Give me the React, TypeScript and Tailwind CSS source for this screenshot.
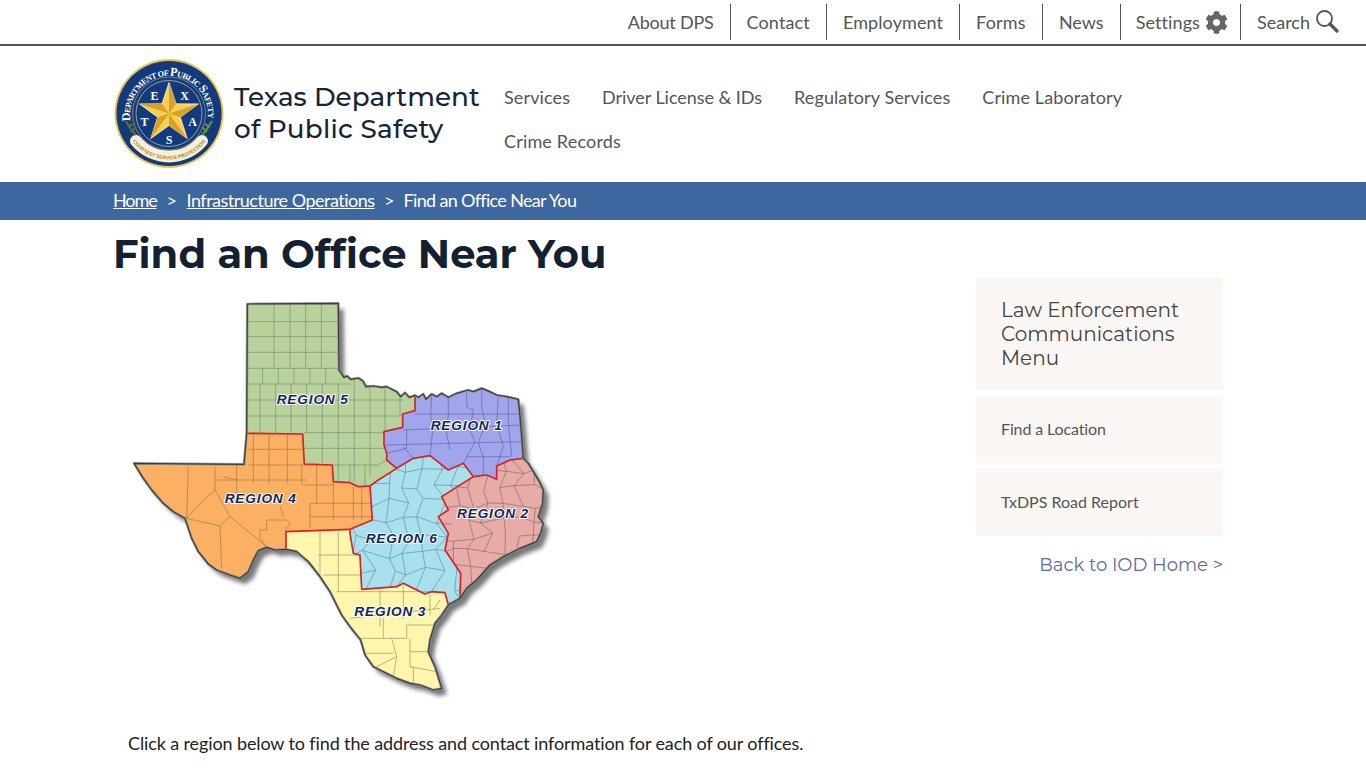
import React from "react";
import { FaCog } from "react-icons/fa";

const top: [string, string][] = [
  ["About DPS", "tracking-[-0.22px]"],
  ["Contact", "tracking-[0.14px]"],
  ["Employment", "tracking-[0.1px]"],
  ["Forms", "tracking-[0.2px]"],
  ["News", ""],
];
const nav: [string, string][] = [
  ["Services", "tracking-[0.12px]"],
  ["Driver License & IDs", "tracking-[-0.05px]"],
  ["Regulatory Services", "tracking-[0.1px]"],
  ["Crime Laboratory", "tracking-[0.12px]"],
  ["Crime Records", "tracking-[0.18px]"],
];

const RED1 = "657,240 672,262 682,258 692,268 715,264 728,272 738,290 760,288 785,292 800,290 830,305 842,320 855,308 868,322 885,316";
const RED2 = "885,316 895,322 910,312 918,328 935,312 950,320 965,310 985,322 1010,310 1045,300 1060,305 1085,295 1110,305 1130,315 1160,320 1195,328";
const EAST1 = "1195,328 1200,380 1205,440 1210,505";
const EAST2 = "1210,505 1225,520 1240,545 1258,575 1270,600 1268,640 1255,680 1270,700 1262,730 1250,755 1200,775 1150,800 1110,825 1070,870 1040,895 1020,925";
const COAST3 = "985,945 965,975 945,1000 930,1050 925,1085 945,1130 965,1195 940,1200 900,1185 870,1180 830,1165 790,1145 760,1130 735,1095 722,1050 690,1010 665,975 630,905 600,860 565,815 530,785 498,778";
const WEST = "498,778 465,780 440,772 415,782 400,810 385,845 360,865 330,855 290,840 265,822 235,785 215,745 195,685 160,665 130,640 95,600 70,565 42,520 372,523 380,430";

const B15 = "885,316 885,362 848,372 848,412 792,425 792,465 800,490 800,510 830,535";
const B16 = "830,535 880,505 930,497 985,540 1030,520 1060,560";
const B12 = "1060,560 1100,555 1130,568 1130,528 1170,510 1210,505";
const B26 = "1060,560 965,620 985,660 955,680 985,730 975,780 1022,850 1020,925";
const B56 = "830,535 775,570 750,588";
const B45 = "380,430 548,432 553,522 637,525 640,575 690,578 715,590 750,588";
const B46 = "750,588 757,690 690,718";
const B43 = "690,718 498,725 498,778";
const B63 = "690,718 690,730 700,790 720,795 725,898 830,890 850,880 880,895 915,912 935,905 975,908 985,945";

const rev = (s: string) => s.split(" ").reverse().join(" ");
const R5 = `382,42 655,40 ${RED1} ${B15} ${B56} ${rev(B45)}`;
const R1 = `${RED2} ${EAST1} ${rev(B12)} ${rev(B16)} ${rev(B15)}`;
const R2 = `${EAST2} ${rev(B26)} ${B12}`;
const R6 = `${B56} ${B46} ${B63} 1020,925 ${rev(B26)} ${rev(B16)}`;
const R4 = `${B45} ${B46} ${B43} ${WEST}`;
const R3 = `${rev(B43)} ${B63.split(" ").slice(1).join(" ")} ${COAST3}`;
const OUTLINE = `380,430 382,42 655,40 ${RED1} ${RED2} ${EAST1} ${EAST2} ${COAST3} ${WEST}`;

function mesh(x0: number, y0: number, x1: number, y1: number, cw: number, ch: number, j: number, seed: number) {
  let s = seed;
  const rnd = () => {
    s = (s * 9301 + 49297) % 233280;
    return s / 233280;
  };
  const cols = Math.ceil((x1 - x0) / cw);
  const rows = Math.ceil((y1 - y0) / ch);
  const pts: [number, number][][] = [];
  for (let r = 0; r <= rows; r++) {
    const row: [number, number][] = [];
    for (let c = 0; c <= cols; c++) {
      row.push([
        Math.round(x0 + c * cw + (r % 2 ? cw / 3 : 0) + (rnd() - 0.5) * j),
        Math.round(y0 + r * ch + (rnd() - 0.5) * j),
      ]);
    }
    pts.push(row);
  }
  let d = "";
  for (let r = 0; r <= rows; r++) {
    for (let c = 0; c <= cols; c++) {
      const p = pts[r][c];
      if (c < cols && rnd() > 0.12) d += `M${p[0]} ${p[1]}L${pts[r][c + 1][0]} ${pts[r][c + 1][1]}`;
      if (r < rows && rnd() > 0.12) d += `M${p[0]} ${p[1]}L${pts[r + 1][c][0]} ${pts[r + 1][c][1]}`;
    }
  }
  return d;
}

const C5 =
  "M382 95H655M382 140H655M382 187H655M382 235H657M462 42V235M510 42V235M557 42V235M604 42V235" +
  "M382 282H690M382 330H850M382 378H848M428 235V282M475 235V282M522 235V282M570 235V282M617 235V282" +
  "M420 282V430M467 282V430M513 282V430M560 282V430M607 282V520M655 282V575M703 270V575M750 290V560M795 295V425M840 310V375M553 428H792M553 475H795M640 525H770M690 525V578M735 525V590M765 530L800 510";
const C1 =
  "M935 318L932 372L938 420L930 497M985 322V372L980 430L990 480M1040 305V350L1060 360L1050 420L1065 455L1030 520M1085 298V350L1095 400L1075 460L1090 500V555M1135 318L1130 400L1150 470L1130 528M1165 320V400L1175 500M885 372L1195 372M850 420L1200 405M795 465L1205 455M850 470L880 505M1040 500H1170M800 490L860 475M860 420V475";
const C2 = mesh(950, 500, 1290, 940, 48, 48, 28, 17);
const C6 = mesh(690, 480, 1060, 940, 52, 52, 30, 71);
const C4 =
  "M205 530L200 685M285 530V600L330 680L440 770M285 600L240 640L200 685M330 680L300 708L200 685M300 708L305 835" +
  "M385 478H552M385 525H640M400 432V580M447 432V580M502 432V580M350 525V620M545 525V580M590 525V640M640 578V690M700 590V690M725 590V690M285 570H560M545 585H640M570 640H755M570 680H755M570 640V715M310 560L350 570" +
  "M420 720V745L440 770M440 690H500L510 700L495 722M440 690V720H420M480 650L490 680";
const C3 =
  "M600 725V850M655 725V905M595 795H720M610 855H725M650 905H985M780 900V1010M850 890V985M930 915V975M690 985L960 955M720 1045H860V1005H940M790 985V1045M815 1045L830 1100L820 1160M730 1090H820M870 1045V1130M925 1085H870M760 1135L830 1100M870 1130L950 1145M880 1180V1130M960 930L940 960";

const regions: [string, string, string, string, string][] = [
  [R5, "#b9d29c", "#66836a", C5, "a"],
  [R4, "#fbb064", "#9a6e42", C4, "b"],
  [R3, "#fdf6ac", "#86835c", C3, "c"],
  [R1, "#a1a5ec", "#555a94", C1, "d"],
  [R2, "#e7aca7", "#7f5c58", C2, "e"],
  [R6, "#a8e0ee", "#56808e", C6, "f"],
];

const labels: [string, number, number][] = [
  ["REGION 5", 470, 341],
  ["REGION 1", 932, 421],
  ["REGION 4", 314, 639],
  ["REGION 2", 1011, 684],
  ["REGION 6", 737, 759],
  ["REGION 3", 703, 979],
];

function TexasMap() {
  return (
    <svg viewBox="0 0 1350 1260" className="block w-[450px] h-[420px] ml-[6px] mt-[2px]">
      <defs>
        <filter id="sh" x="-10%" y="-10%" width="120%" height="120%">
          <feGaussianBlur stdDeviation="7" />
        </filter>
        {regions.map(([p, , , , id]) => (
          <clipPath key={id} id={`clip-${id}`}>
            <polygon points={p} />
          </clipPath>
        ))}
      </defs>
      <polygon points={OUTLINE} transform="translate(16 18)" fill="#77787a" filter="url(#sh)" />
      {regions.map(([p, f, , , id]) => <polygon key={id} points={p} fill={f} stroke={f} strokeWidth="1" />)}
      {regions.map(([, , c, d, id]) => (
        <g key={id} clipPath={`url(#clip-${id})`}>
          <path d={d} fill="none" stroke={c} strokeWidth="1.7" />
        </g>
      ))}
      <g fill="none" stroke="#d3232a" strokeWidth="5" strokeLinejoin="round">
        {[B15, B16, B12, B26, B56, B45, B46, B43, B63].map((p, i) => <polyline key={i} points={p} />)}
      </g>
      <polygon points={OUTLINE} fill="none" stroke="#8d8d8d" strokeWidth="8" strokeLinejoin="round" opacity="0.8" />
      <polygon points={OUTLINE} fill="none" stroke="#3b3b3b" strokeWidth="3.6" strokeLinejoin="round" />
      {labels.map(([t, x, y]) => (
        <text
          key={t}
          x={x}
          y={y}
          fontFamily="'Liberation Sans', sans-serif"
          fontWeight="700"
          fontStyle="italic"
          fontSize="41"
          letterSpacing="2.5"
          fill="#12265a"
          stroke="#ffffff"
          strokeWidth="6"
          paintOrder="stroke"
          strokeLinejoin="round"
        >
          {t}
        </text>
      ))}
    </svg>
  );
}

function Seal() {
  const outer: [number, number][] = [[55, 23.5], [84.5, 44.9], [73.2, 79.6], [36.8, 79.6], [25.5, 44.9]];
  const inner: [number, number][] = [[62, 44.8], [66.4, 58.2], [55, 66.5], [43.6, 58.2], [48, 44.8]];
  const star = outer.map((p, i) => `${p[0]},${p[1]} ${inner[i][0]},${inner[i][1]}`).join(" ");
  return (
    <svg viewBox="0 0 110 110" className="block w-[110px] h-[110px] shrink-0">
      <defs>
        <path id="arc" d="M16.5 62 A39 39 0 1 1 93.5 62" />
        <path id="arc2" d="M17.3 80.9 A46 46 0 0 0 92.7 80.9" />
      </defs>
      <circle cx="55" cy="54.5" r="54.5" fill="#e9c44a" />
      <circle cx="55" cy="54.5" r="52.6" fill="#123a7c" />
      <circle cx="55" cy="54.5" r="33" fill="none" stroke="#d9cf8c" strokeWidth="0.7" />
      <circle cx="55" cy="54.5" r="36.5" fill="none" stroke="#d9cf8c" strokeWidth="0.5" />
      <text fontFamily="'Liberation Serif', serif" fontSize="8.2" fontWeight="700" fill="#fff">
        <textPath href="#arc" startOffset="0" textLength="132">
          <tspan fontSize="12">D</tspan>EPARTMENT OF <tspan fontSize="12">P</tspan>UBLIC <tspan fontSize="12">S</tspan>AFETY
        </textPath>
      </text>
      <polygon points={star} fill="#f7cf55" stroke="#fff" strokeWidth="0.7" />
      {outer.map((p, i) => (
        <polygon key={i} points={`55,54.5 ${p[0]},${p[1]} ${inner[i][0]},${inner[i][1]}`} fill="#d9a227" />
      ))}
      <g fontFamily="'Liberation Serif', serif" fontSize="12" fontWeight="700" fill="#fff" textAnchor="middle">
        <text x="40.5" y="40.5">E</text>
        <text x="70.5" y="40.5">X</text>
        <text x="30.5" y="67">T</text>
        <text x="78.5" y="67">A</text>
        <text x="55" y="85">S</text>
      </g>
      <path d="M22 82A43 43 0 0 0 88 82" fill="none" stroke="#f6f0d8" strokeWidth="12" strokeLinecap="round" />
      <text fontFamily="'Liberation Sans', sans-serif" fontSize="5" fontWeight="700" fill="#b8861f">
        <textPath href="#arc2" startOffset="2" textLength="84">COURTESY SERVICE PROTECTION</textPath>
      </text>
      <path d="M12 62C15 68 18 72 22 76M14 68L19 65M17 73L22 68" fill="none" stroke="#5f6b34" strokeWidth="2.2" />
      <path d="M98 62C95 68 92 72 88 76M96 68L91 65M93 73L88 68" fill="none" stroke="#5e8f3d" strokeWidth="2.2" />
    </svg>
  );
}

export default function App() {
  return (
    <div className="h-[768px] overflow-hidden bg-white font-['Lato',sans-serif] text-[#555]">
      <div className="h-[46px] border-b-2 border-[#555] flex justify-end items-start pr-[27px] pt-[4px]">
        {top.map(([t, c]) => (
          <a key={t} className={`h-[36px] flex items-center px-[16px] border-r border-[#555] text-[18px] text-[#555] ${c}`}>{t}</a>
        ))}
        <a className="h-[36px] flex items-center gap-[5px] pl-[15px] pr-[12px] border-r border-[#555] text-[18px] tracking-[0.1px]">
          Settings <FaCog className="w-[23px] h-[23px] text-[#666]" />
        </a>
        <a className="h-[36px] flex items-center gap-[5px] pl-[16px] text-[18px]">
          Search
          <svg viewBox="0 0 24 24" className="w-[24px] h-[24px] mb-[3px]" fill="none">
            <circle cx="9.5" cy="9.5" r="7.5" stroke="#555" strokeWidth="1.8" />
            <path d="M15 15L22 22" stroke="#555" strokeWidth="3.2" strokeLinecap="round" />
          </svg>
        </a>
      </div>
      <div className="h-[136px] flex pl-[114px]">
        <div className="pt-[13px]"><Seal /></div>
        <div className="ml-[10px] w-[254px] pt-[35px] font-['Montserrat',sans-serif] text-[26.2px] leading-[32px] font-medium text-[#13243a]">
          <span className="block tracking-[0.05px]">Texas Department</span>
          <span className="block tracking-[0.25px]">of Public Safety</span>
        </div>
        <nav className="w-[680px] pt-[29px] flex flex-wrap content-start text-[18px] leading-[44px] text-[#555]">
          {nav.map(([n, c]) => (<a key={n} className={`px-[16px] ${c}`}>{n}</a>))}
        </nav>
      </div>
      <div className="h-[38px] bg-[#3e67a0] flex items-center pb-[2px] pl-[113px] text-white text-[18px]">
        <a className="underline tracking-[-1.1px]">Home</a>
        <span className="mx-[10px] tracking-[-0.5px]">&gt;</span>
        <a className="underline tracking-[-0.5px]">Infrastructure Operations</a>
        <span className="mx-[9.5px] tracking-[-0.5px]">&gt;</span>
        <span className="tracking-[-0.67px]">Find an Office Near You</span>
      </div>
      <div className="flex pl-[113px]">
        <div className="w-[863px]">
          <h1 className="h-[68px] pt-[9px] font-['Montserrat',sans-serif] font-bold text-[40px] leading-[50px] text-[#13202f]">
            Find an Office Near You
          </h1>
          <div className="ml-[1px]"><TexasMap /></div>
          <p className="mt-[19px] ml-[15px] text-[18px] leading-[28px] text-[#222] tracking-[-0.12px]">
            Click a region below to find the address and contact information for each of our offices.
          </p>
        </div>
        <aside className="w-[247px] mt-[58px] flex flex-col">
          <div className="h-[112px] bg-[#fbf7f4] px-[25px] pt-[20px] font-['Montserrat',sans-serif] text-[20px] leading-[24px] text-[#444]">
            Law Enforcement Communications Menu
          </div>
          <div className="mt-[5px] h-[68px] bg-[#fbf7f4] px-[25px] flex items-center text-[16px] text-[#555] tracking-[-0.13px]">Find a Location</div>
          <div className="mt-[5px] h-[68px] bg-[#fbf7f4] px-[25px] flex items-center text-[16px] text-[#555]">TxDPS Road Report</div>
          <a className="mt-[17px] text-right font-['Montserrat',sans-serif] text-[18px] leading-[24px] text-[#5c6b9c]">Back to IOD Home &gt;</a>
        </aside>
      </div>
    </div>
  );
}
